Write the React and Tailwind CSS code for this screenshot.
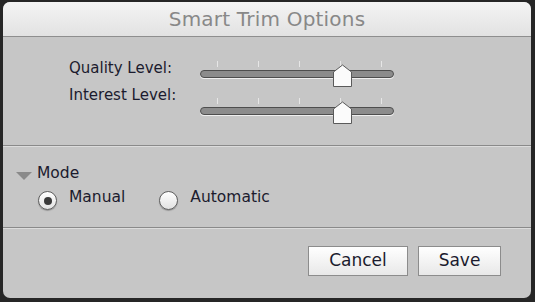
import React, { useState } from 'react';

const Slider = ({ value }) => {
    const ticks = [0, 1, 2, 3, 4];
    return (
        <div className="relative w-[194px] h-[30px]">
            {ticks.map((t) => (
                <div
                    key={t}
                    className="absolute top-[2px] w-px h-[6px] bg-[#e6e6e6]"
                    style={{ left: 17 + t * 41 }}
                />
            ))}
            <div className="absolute left-0 right-0 top-[11px] h-[8px] rounded-full bg-[#8c8c8c] border border-[#4e4e4e] shadow-[0_1px_0_#efefef]" />
            <svg
                className="absolute top-[5px]"
                style={{ left: value - 10 }}
                width="21"
                height="24"
                viewBox="0 0 21 24"
            >
                <path d="M1.5 8 L10.5 1 L19.5 8 L19.5 22.5 L1.5 22.5 Z" fill="#fbfbfb" stroke="#5a5a5a" strokeWidth="1" />
            </svg>
        </div>
    );
};

const Radio = ({ checked, label, onClick }) => (
    <button onClick={onClick} className="flex items-center gap-[12px] outline-none">
        <span className="w-[19px] h-[19px] rounded-full border border-[#5e5e5e] bg-gradient-to-b from-[#ffffff] to-[#e2e2e2] flex items-center justify-center shadow-[0_1px_1px_rgba(0,0,0,0.25)]">
            {checked && <span className="w-[8px] h-[8px] rounded-full bg-[#3a3a3a]" />}
        </span>
        <span className="text-[15.5px] text-[#1b1b2e] -mt-[6px]">{label}</span>
    </button>
);

const App = () => {
    const [mode, setMode] = useState('manual');

    return (
        <div className="w-[535px] h-[302px] bg-[#262626] pt-[2px] pl-[3px] pr-[4px] pb-[4px]" style={{ fontFamily: '"DejaVu Sans", "Liberation Sans", sans-serif' }}>
            <div className="h-full rounded-[7px] bg-[#c6c6c6] flex flex-col overflow-hidden">
                {/* Title bar */}
                <div className="h-[35px] bg-gradient-to-b from-[#f4f4f4] to-[#e2e2e2] border-b border-[#8e8e8e] flex items-center justify-center">
                    <span className="text-[20px] text-[#888888] tracking-[0.2px]">Smart Trim Options</span>
                </div>

                {/* Sliders */}
                <div className="h-[109px] border-b border-[#8a8a8a] pl-[66px] flex">
                    <div className="w-[131px] pt-[22px] flex flex-col gap-[9px] text-[15px] leading-[18px] text-[#1b1b2e]">
                        <span>Quality Level:</span>
                        <span>Interest Level:</span>
                    </div>
                    <div className="pt-[22px] flex flex-col gap-[7px]">
                        <Slider value={142} />
                        <Slider value={142} />
                    </div>
                </div>

                {/* Mode */}
                <div className="h-[82px] border-t border-[#dcdcdc] border-b border-b-[#8a8a8a] pt-[15px]">
                    <div className="flex items-center pl-[12px]">
                        <svg width="18" height="10" viewBox="0 0 18 10" className="mt-[4px]">
                            <path d="M1 1 L17 1 L9 9 Z" fill="#8a8a8a" />
                        </svg>
                        <span className="ml-[4px] text-[15.5px] text-[#1b1b2e]">Mode</span>
                    </div>
                    <div className="flex items-center pl-[35px] mt-[6px] gap-[34px]">
                        <Radio checked={mode === 'manual'} label="Manual" onClick={() => setMode('manual')} />
                        <Radio checked={mode === 'automatic'} label="Automatic" onClick={() => setMode('automatic')} />
                    </div>
                </div>

                {/* Buttons */}
                <div className="flex-1 border-t border-[#dcdcdc] flex justify-end items-start pt-[17px] pr-[30px] gap-[10px]">
                    <button className="w-[100px] h-[30px] bg-gradient-to-b from-[#ffffff] to-[#e8e8e8] border border-[#8c8c8c] text-[17px] text-[#1b1b2e]">Cancel</button>
                    <button className="w-[83px] h-[30px] bg-gradient-to-b from-[#ffffff] to-[#e8e8e8] border border-[#8c8c8c] text-[17px] text-[#1b1b2e]">Save</button>
                </div>
            </div>
        </div>
    );
};

export default App;
